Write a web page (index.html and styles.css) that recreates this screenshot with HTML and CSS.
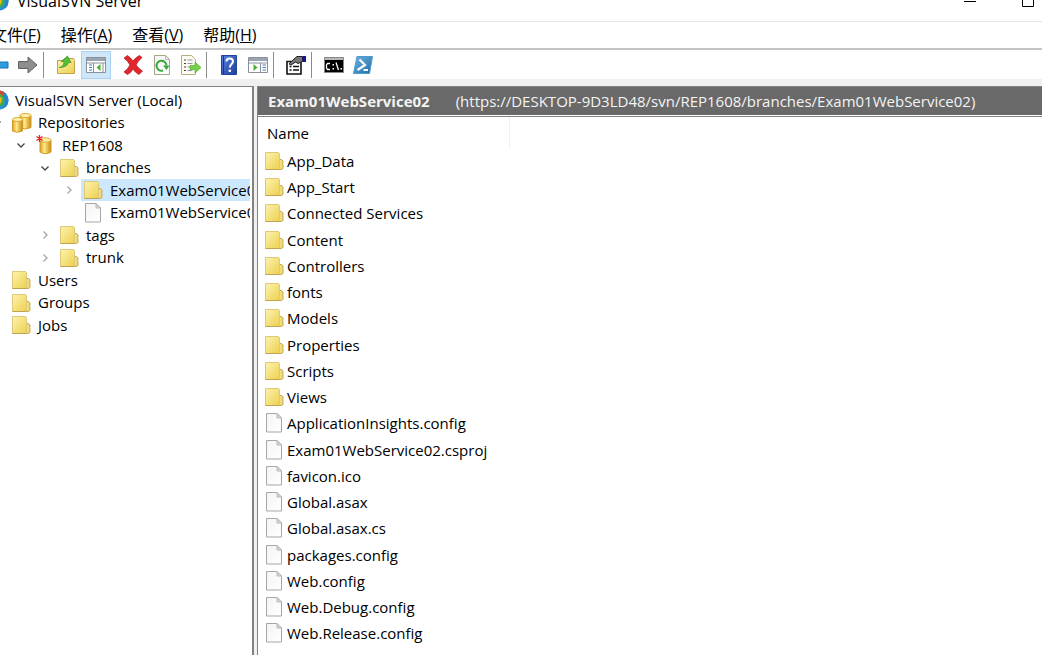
FILE: index.html
```html
<!DOCTYPE html>
<html lang="zh-CN">
<head>
<meta charset="utf-8">
<title>VisualSVN Server</title>
<link rel="stylesheet" href="styles.css">
</head>
<body>
<svg class="defs" aria-hidden="true">
  <defs>
    <linearGradient id="gold" x1="0" y1="0" x2="1" y2="1"><stop offset="0" stop-color="#fdf3b0"/><stop offset="1" stop-color="#ecd04e"/></linearGradient>
    <linearGradient id="paper" x1="0" y1="0" x2="1" y2="1"><stop offset="0" stop-color="#f4f4f4"/><stop offset="1" stop-color="#ffffff"/></linearGradient>
    <linearGradient id="drum" x1="0" y1="0" x2="1" y2="0"><stop offset="0" stop-color="#e0a01c"/><stop offset=".4" stop-color="#ffe98a"/><stop offset="1" stop-color="#c98a12"/></linearGradient>
    <linearGradient id="blue" x1="0" y1="0" x2="1" y2="1"><stop offset="0" stop-color="#5a85e0"/><stop offset="1" stop-color="#1b3c9c"/></linearGradient>
    <linearGradient id="shell" x1="0" y1="0" x2="1" y2="1"><stop offset="0" stop-color="#6fb4e0"/><stop offset="1" stop-color="#1d6ca8"/></linearGradient>
    <symbol id="folder" viewBox="0 0 20 20">
      <path d="M13 8.500h3.500l1.500 1.500v2l-.500 1 .500 1v3.500l-2 1h-3z" fill="#f0dc7c" stroke="#c4a850"/>
      <path d="M.500 1.500h13l1 1v16H.500z" fill="url(#gold)" stroke="#dfc878"/>
      <path d="M.500 18.500h14" stroke="#c0a255"/>
    </symbol>
    <symbol id="file" viewBox="0 0 20 20">
      <path d="M1.500 .500h10.500l4.500 4.500v14h-15z" fill="url(#paper)" stroke="#a6a6a6"/>
      <path d="M12 .500v4.500h4.500z" fill="#d8d8d8" stroke="#b8b8b8"/>
    </symbol>
    <symbol id="globe" viewBox="0 0 20 20">
      <circle cx="10" cy="10" r="9.500" fill="#2590d0"/>
      <path d="M4 2a9.500 9.500 0 0 1 13 2l-4 5-9-1z" fill="#d8492c"/>
      <path d="M5 5l7-1 4 5-2 6-6 3z" fill="#3fae49"/>
      <path d="M7 6l6 2-1 5-5 2z" fill="#f5b916"/>
      <path d="M14 2q5 3 5.500 8 0 5-4 8 1-9-1.500-16z" fill="#2c83c8"/>
    </symbol>
    <symbol id="cylinders" viewBox="0 0 20 20">
      <path d="M8 2.500v12q5.500 3 11 0v-12z" fill="url(#drum)" stroke="#d09a2a"/>
      <ellipse cx="13.500" cy="2.500" rx="5.500" ry="2" fill="#fff0a8" stroke="#d8a83c"/>
      <path d="M.500 6.500V18q5 2.500 10 0V6.500z" fill="url(#drum)" stroke="#d09a2a"/>
      <ellipse cx="5.500" cy="6.500" rx="5" ry="2" fill="#fff0a8" stroke="#d8a83c"/>
    </symbol>
    <symbol id="cylinder" viewBox="0 0 20 20">
      <path d="M4 5v12q5.500 3.500 11 0V5z" fill="url(#drum)" stroke="#d09a2a"/>
      <ellipse cx="9.500" cy="5" rx="5.500" ry="2.200" fill="#fff0a8" stroke="#d8a83c"/>
      <path d="M3.500 0v7M.500 1.500l6 4M6.500 1.500l-6 4" stroke="#e8202c" stroke-width="1.300"/>
    </symbol>
    <symbol id="open" viewBox="0 0 12 12"><path d="M2.500 4.500L6 8l3.500-3.500" fill="none" stroke="#444" stroke-width="1.300"/></symbol>
    <symbol id="closed" viewBox="0 0 12 12"><path d="M4.500 2.500L8 6l-3.500 3.500" fill="none" stroke="#a6a6a6" stroke-width="1.300"/></symbol>
  </defs>
</svg>

<div class="window">
  <header class="titlebar">
    <svg class="app-icon"><use href="#globe"/></svg>
    <h1 class="title">VisualSVN Server</h1>
    <button class="caption-button" aria-label="Minimize"><svg class="caption-icon" viewBox="0 0 12 12"><path d="M0 6.500h12" stroke="#000"/></svg></button>
    <button class="caption-button" aria-label="Maximize"><svg class="caption-icon" viewBox="0 0 12 12"><path d="M.500 .500h11v11H.500z" fill="none" stroke="#000"/></svg></button>
  </header>

  <nav class="menubar">
    <button class="menu">文件(<u>F</u>)</button>
    <button class="menu">操作(<u>A</u>)</button>
    <button class="menu">查看(<u>V</u>)</button>
    <button class="menu">帮助(<u>H</u>)</button>
  </nav>

  <div class="toolbar" role="toolbar">
    <button class="tool back" aria-label="Back"><svg class="tool-icon" viewBox="0 0 20 20"><path d="M1 10l8-8v5h9v6H9v5z" fill="#2f9be0" stroke="#1772b8"/></svg></button>
    <button class="tool" aria-label="Forward"><svg class="tool-icon" viewBox="0 0 20 20"><path d="M.500 6.500H10V2l9 8-9 8v-4.500H.500z" fill="#8e8e8e" stroke="#606060"/></svg></button>
    <span class="separator"></span>
    <button class="tool" aria-label="Up one level"><svg class="tool-icon" viewBox="0 0 20 20"><path d="M1.500 5.500h8V3.500h8l1 2v13h-17z" fill="url(#gold)" stroke="#c3a04a"/><path d="M3 12.500q5-.500 5-6H5L11.500 1 15 7.500h-2.500q-1.500 5-9.500 5z" fill="#55bd3a" stroke="#3a9528" stroke-width=".7"/></svg></button>
    <button class="tool active" aria-label="Show console tree"><svg class="tool-icon" viewBox="0 0 20 20"><path d="M.500 2.500h19v15H.500z" fill="#fff" stroke="#8a919c"/><path d="M1 3h18v3H1z" fill="#9aa3b0"/><path d="M1 8h18M7.500 8v9" stroke="#8a919c"/><path d="M3 10h3M3 12.500h3M3 15h3" stroke="#4a78b8"/><path d="M14.500 9v7l-4-3.500z" fill="#49ae35"/><path d="M17 8v9" stroke="#8a919c"/></svg></button>
    <button class="tool" aria-label="Delete"><svg class="tool-icon" viewBox="0 0 20 20"><path d="M1 3l3.500-2.500Q8 3 10 6q3-4 6.500-5.500l2.500 2Q15 6 13 10q3 4 6.500 6L16 19.500q-4-2-6-5.500-2 4-5.500 5.500L1 17q4-3 6-7-2-4-6-7z" fill="#e3262c" stroke="#a9141c" stroke-width=".7"/></svg></button>
    <button class="tool" aria-label="Refresh"><svg class="tool-icon" viewBox="0 0 20 20"><path d="M2.500 .500h11l4 4v15h-15z" fill="url(#paper)" stroke="#aaa586"/><path d="M13.500 .500v4h4" fill="none" stroke="#bbb"/><path d="M11 15.500a5 5 0 1 1 3.500-5" fill="none" stroke="#39a83c" stroke-width="2"/><path d="M11 10.500h6.500l-3 4.500z" fill="#39a83c"/></svg></button>
    <button class="tool" aria-label="Export list"><svg class="tool-icon" viewBox="0 0 20 20"><path d="M.500 .500h10l4 4v15H.500z" fill="#fdfcee" stroke="#b5ae84"/><path d="M3 5h2M3 8.500h2M3 12h2M3 15.500h2" stroke="#444"/><path d="M6.500 5h5M6.500 8.500h5M6.500 12h4M6.500 15.500h5" stroke="#918fc4"/><path d="M9 10.500h5V7l6 5.500-6 5.500v-3.500H9z" fill="#73d047" stroke="#4aa52b" stroke-width=".6"/></svg></button>
    <span class="separator"></span>
    <button class="tool" aria-label="Help"><svg class="tool-icon" viewBox="0 0 20 20"><path d="M2.500 .500h15v19h-15z" fill="url(#blue)" stroke="#23429a"/><path d="M4.500 1v18" stroke="#183785"/><path d="M7.500 6.500q0-3 3.200-3t3.300 3c0 2.500-3.200 2.500-3.200 6" fill="none" stroke="#fff" stroke-width="2"/><circle cx="10.800" cy="15.800" r="1.400" fill="#fff"/></svg></button>
    <button class="tool" aria-label="Show action pane"><svg class="tool-icon" viewBox="0 0 20 20"><path d="M.500 2.500h19v15H.500z" fill="#fff" stroke="#8a919c"/><path d="M1 3h18v3H1z" fill="#9aa3b0"/><path d="M1 8h18M12.500 8v9" stroke="#8a919c"/><path d="M14.500 10H18M14.500 12.500H18M14.500 15H18" stroke="#4a78b8"/><path d="M5.500 9v7l4-3.500z" fill="#49ae35"/></svg></button>
    <span class="separator"></span>
    <button class="tool" aria-label="Properties"><svg class="tool-icon" viewBox="0 0 20 20"><path d="M1 6.500h14v12.500H1z" fill="#fff" stroke="#111" stroke-width="1.600"/><path d="M3.500 11.500h2M7 11.500h6M3.500 15h2M7 15h6" stroke="#111" stroke-width="1.400"/><path d="M3 9l5-5 3-2.500h5.500v5L12 8.500 9.500 7 5 10z" fill="#777" stroke="#222"/><path d="M16.500 1H20v6h-3.500z" fill="#17178c"/></svg></button>
    <span class="separator"></span>
    <button class="tool" aria-label="Command prompt"><svg class="tool-icon" viewBox="0 0 20 20"><path d="M.500 2.500h19v15H.500z" fill="#000" stroke="#888"/><path d="M1 3h18v2H1z" fill="#b8b8b8"/><path d="M6 8.500H3.500L2.500 10v3l1 1.500H6M12 7.500l2.500 7.500" fill="none" stroke="#fff" stroke-width="1.300"/><path d="M8.500 9h1.500v1.500H8.500zM8.500 13h1.500v1.500H8.500zM16.500 13H18v1.500h-1.500z" fill="#fff"/></svg></button>
    <button class="tool" aria-label="PowerShell"><svg class="tool-icon" viewBox="0 0 20 20"><path d="M4 1.500h15.500L16.500 18.500H.500z" fill="url(#shell)" stroke="#4e9acb"/><path d="M6.500 4.500L12 10l-7.500 5" fill="none" stroke="#fff" stroke-width="2.200"/><path d="M10.500 15h4.500" stroke="#fff" stroke-width="2"/></svg></button>
  </div>

  <main class="workspace">
    <ul class="tree" role="tree">
      <li class="node root" role="treeitem"><svg class="icon"><use href="#globe"/></svg><span class="label">VisualSVN Server (Local)</span></li>
      <li class="node" role="treeitem"><svg class="twisty"><use href="#open"/></svg><svg class="icon"><use href="#cylinders"/></svg><span class="label">Repositories</span></li>
      <li class="node level-2" role="treeitem"><svg class="twisty"><use href="#open"/></svg><svg class="icon"><use href="#cylinder"/></svg><span class="label">REP1608</span></li>
      <li class="node level-3" role="treeitem"><svg class="twisty"><use href="#open"/></svg><svg class="icon"><use href="#folder"/></svg><span class="label">branches</span></li>
      <li class="node level-4 selected" role="treeitem"><svg class="twisty"><use href="#closed"/></svg><svg class="icon"><use href="#folder"/></svg><span class="label">Exam01WebService02</span></li>
      <li class="node level-4" role="treeitem"><svg class="twisty"></svg><svg class="icon"><use href="#file"/></svg><span class="label">Exam01WebService02</span></li>
      <li class="node level-3" role="treeitem"><svg class="twisty"><use href="#closed"/></svg><svg class="icon"><use href="#folder"/></svg><span class="label">tags</span></li>
      <li class="node level-3" role="treeitem"><svg class="twisty"><use href="#closed"/></svg><svg class="icon"><use href="#folder"/></svg><span class="label">trunk</span></li>
      <li class="node" role="treeitem"><svg class="twisty"></svg><svg class="icon"><use href="#folder"/></svg><span class="label">Users</span></li>
      <li class="node" role="treeitem"><svg class="twisty"></svg><svg class="icon"><use href="#folder"/></svg><span class="label">Groups</span></li>
      <li class="node" role="treeitem"><svg class="twisty"></svg><svg class="icon"><use href="#folder"/></svg><span class="label">Jobs</span></li>
    </ul>

    <section class="content">
      <div class="banner"><h2 class="banner-title">Exam01WebService02</h2><span>(https://DESKTOP-9D3LD48/svn/REP1608/branches/Exam01WebService02)</span></div>
      <div class="list">
        <table class="files">
          <thead><tr><th scope="col">Name</th></tr></thead>
          <tbody>
            <tr><td><div class="entry"><svg class="icon"><use href="#folder"/></svg>App_Data</div></td></tr>
            <tr><td><div class="entry"><svg class="icon"><use href="#folder"/></svg>App_Start</div></td></tr>
            <tr><td><div class="entry"><svg class="icon"><use href="#folder"/></svg>Connected Services</div></td></tr>
            <tr><td><div class="entry"><svg class="icon"><use href="#folder"/></svg>Content</div></td></tr>
            <tr><td><div class="entry"><svg class="icon"><use href="#folder"/></svg>Controllers</div></td></tr>
            <tr><td><div class="entry"><svg class="icon"><use href="#folder"/></svg>fonts</div></td></tr>
            <tr><td><div class="entry"><svg class="icon"><use href="#folder"/></svg>Models</div></td></tr>
            <tr><td><div class="entry"><svg class="icon"><use href="#folder"/></svg>Properties</div></td></tr>
            <tr><td><div class="entry"><svg class="icon"><use href="#folder"/></svg>Scripts</div></td></tr>
            <tr><td><div class="entry"><svg class="icon"><use href="#folder"/></svg>Views</div></td></tr>
            <tr><td><div class="entry"><svg class="icon"><use href="#file"/></svg>ApplicationInsights.config</div></td></tr>
            <tr><td><div class="entry"><svg class="icon"><use href="#file"/></svg>Exam01WebService02.csproj</div></td></tr>
            <tr><td><div class="entry"><svg class="icon"><use href="#file"/></svg>favicon.ico</div></td></tr>
            <tr><td><div class="entry"><svg class="icon"><use href="#file"/></svg>Global.asax</div></td></tr>
            <tr><td><div class="entry"><svg class="icon"><use href="#file"/></svg>Global.asax.cs</div></td></tr>
            <tr><td><div class="entry"><svg class="icon"><use href="#file"/></svg>packages.config</div></td></tr>
            <tr><td><div class="entry"><svg class="icon"><use href="#file"/></svg>Web.config</div></td></tr>
            <tr><td><div class="entry"><svg class="icon"><use href="#file"/></svg>Web.Debug.config</div></td></tr>
            <tr><td><div class="entry"><svg class="icon"><use href="#file"/></svg>Web.Release.config</div></td></tr>
          </tbody>
        </table>
      </div>
    </section>
  </main>
</div>
</body>
</html>
```
FILE: styles.css
```css
* { box-sizing: border-box; }

body {
  margin: 0;
  overflow: hidden;
  background: #fff;
  color: #000;
  font: 15px/20px "Open Sans", "Noto Sans CJK SC", sans-serif;
}

h1, h2, ul { margin: 0; padding: 0; font-size: inherit; }
ul { list-style: none; }
button { padding: 0; border: 0; background: none; color: inherit; font: inherit; }
svg { display: block; flex: none; }

.defs { position: absolute; width: 0; height: 0; }

/* The window hangs slightly over the top-left corner of the viewport. */
.window {
  display: flex;
  flex-direction: column;
  min-height: calc(100vh + 20px);
  margin: -20px 0 0 -11px;
}

.titlebar {
  display: flex;
  align-items: center;
  height: 42px;
  padding-right: 8px;
  border-bottom: 1px solid #e6e6e6;
}
.app-icon { width: 20px; height: 20px; margin-right: 8px; }
.title { flex: 1; font-weight: 400; font-size: 16px; }
.caption-button { display: grid; place-items: center; width: 58px; height: 32px; }
.caption-button:last-child { width: 12px; margin-left: 23px; }
.caption-icon { width: 12px; height: 12px; }

.menubar {
  display: flex;
  gap: 20px;
  height: 28px;
  padding-left: 2px;
  border-bottom: 2px solid #c4c4c4;
}
.menu { font-size: 16px; }

.toolbar {
  display: flex;
  align-items: center;
  height: 29px;
  padding-left: 1px;
}
.tool { display: grid; place-items: center; width: 29px; height: 28px; }
.tool.back { width: 23px; justify-content: start; }
.tool.active { width: 30px; margin: 0 7px 0 1px; border: 1px solid #a8d3f5; background: #cfe6f9; }
.tool-icon { width: 20px; height: 20px; }
.separator { width: 1px; height: 26px; margin: 0 7px 0 1px; background: #8c8c8c; }

.workspace {
  display: flex;
  flex: 1;
  gap: 3px;
  padding-top: 7px;
  background: #f0f0f0;
}

.tree {
  display: grid;
  flex: none;
  grid-auto-rows: 22px 23px;
  align-content: start;
  width: 265px;
  padding: 2px 2px 0 0;
  border: solid #828282;
  border-width: 1px 2px 0 0;
  background: #fff;
}
.node { display: flex; align-items: center; min-width: 0; overflow: hidden; }
.level-2 { padding-left: 24px; }
.level-3 { padding-left: 48px; }
.level-4 { padding-left: 72px; }
.icon { width: 20px; height: 20px; }
.twisty { width: 12px; height: 12px; margin: 0 9px 0 2px; }
.label { flex: 1; align-self: stretch; min-width: 0; padding-left: 6px; overflow: hidden; line-height: 22px; white-space: nowrap; }
.selected { background: linear-gradient(#cce8ff, #cce8ff) 92px 0 no-repeat; }

.content { flex: 1; min-width: 0; border: solid #828282; border-width: 1px 0 0 1px; background: #fff; }
.banner {
  display: flex;
  align-items: center;
  gap: 26px;
  height: 28px;
  padding-left: 10px;
  background: #696969;
  color: #f4f4f4;
  white-space: nowrap;
}
.banner-title { font-weight: 700; }

.list { margin-top: 1px; border-top: 1px solid #828282; }
.files { width: 252px; border-collapse: collapse; }
.files th { height: 31px; padding: 1px 0 0 9px; border-right: 1px solid #efefef; font-weight: 400; text-align: left; }
.files td { padding: 0; }
.files tbody tr { height: 26px; }
.files tbody tr:nth-child(4n) { height: 27px; }
.entry { display: flex; align-items: center; gap: 2px; padding-left: 7px; white-space: nowrap; }
```
